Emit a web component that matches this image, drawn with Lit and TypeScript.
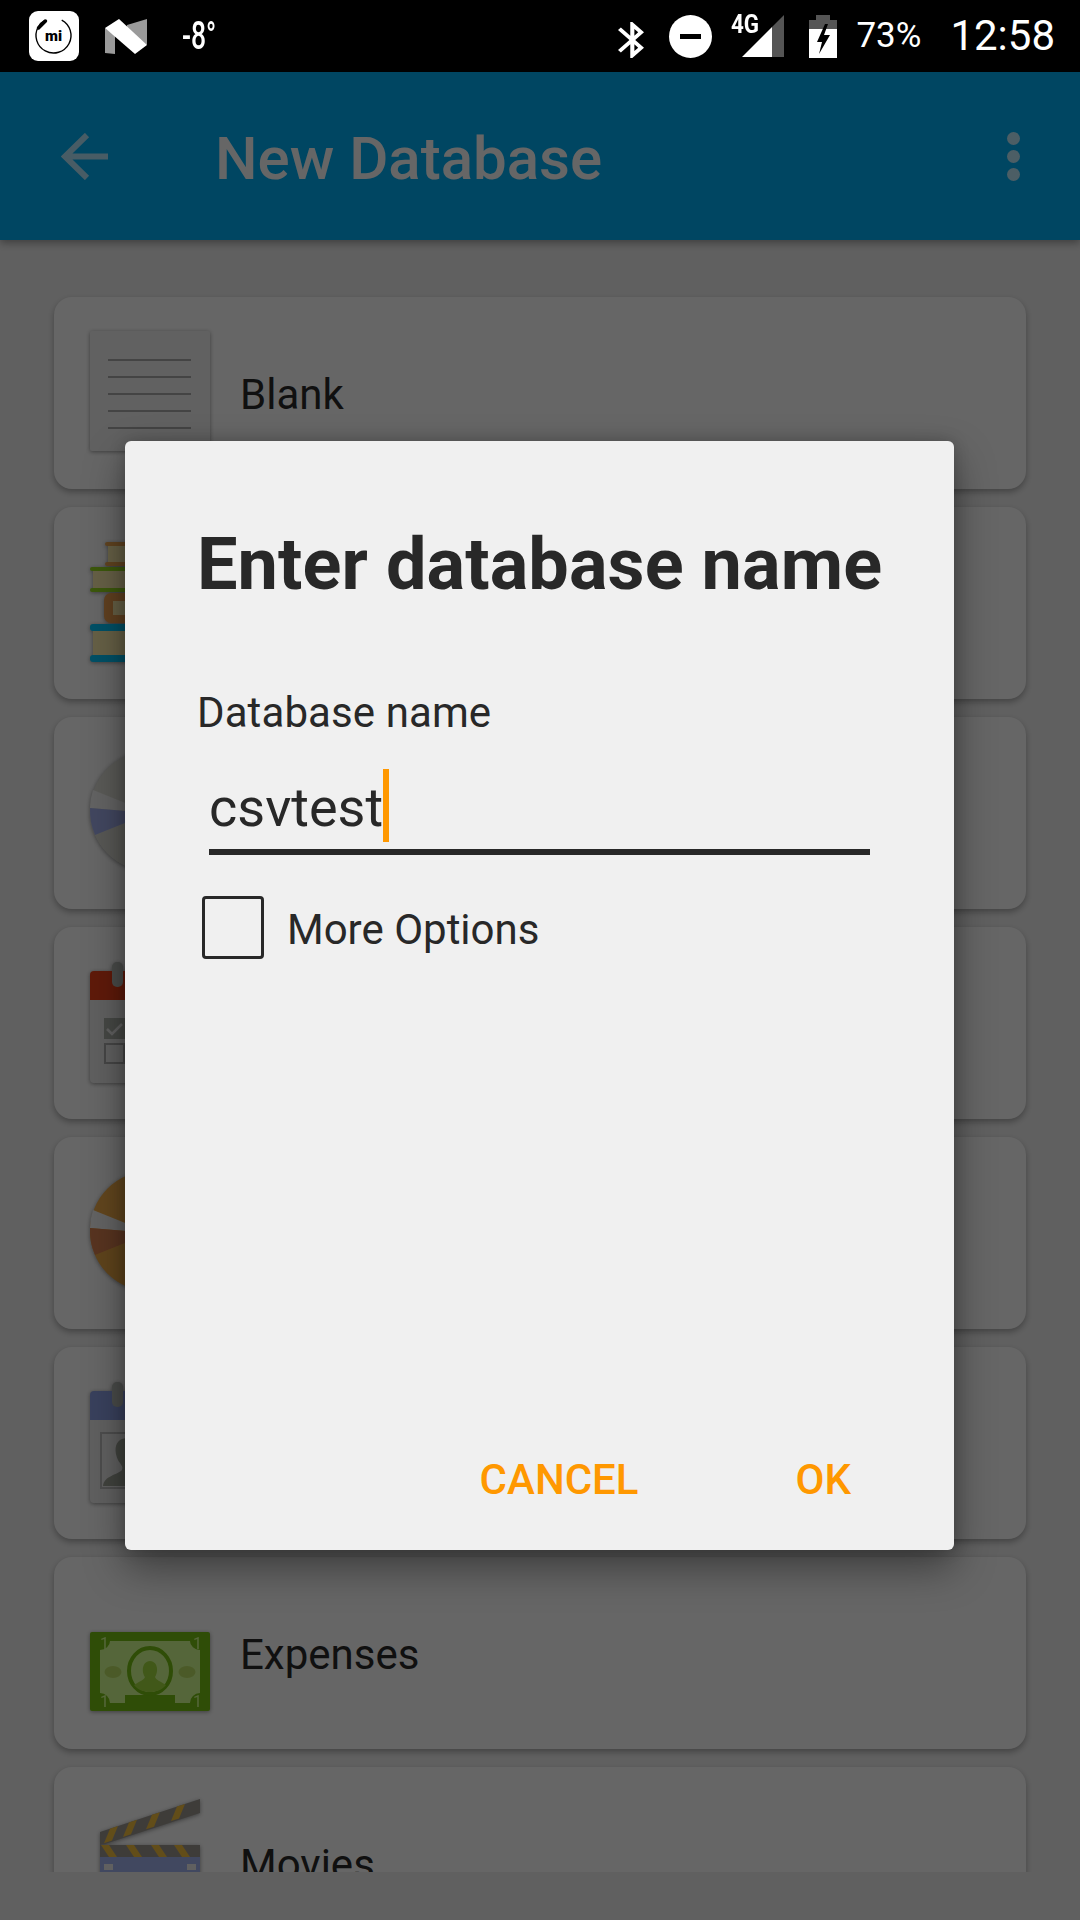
import { LitElement, html, css, svg } from 'lit';
import { customElement } from 'lit/decorators.js';

const docIcon = svg`
  <rect width="120" height="120" rx="2" fill="#f2f2f2" />
  ${[29, 46, 63, 80, 97].map((y) => svg`<rect x="18" y=${y - 1} width="83" height="2" fill="#aaa" />`)}
`;

const booksIcon = svg`
  <rect x="18" y="5" width="84" height="16" fill="#fff0b0" />
  <rect x="15" y="1" width="90" height="4" rx="2" fill="#f0a850" />
  <rect x="15" y="21" width="90" height="4" rx="2" fill="#f0a850" />
  <rect x="3" y="30" width="114" height="17" fill="#fff0b0" />
  <rect x="0" y="26" width="120" height="4" rx="2" fill="#96dc1e" />
  <rect x="0" y="47" width="120" height="4" rx="2" fill="#96dc1e" />
  <rect x="14" y="52" width="92" height="30" rx="7" fill="#f0a050" />
  <rect x="23" y="60" width="74" height="14" fill="#fff0b0" />
  <rect x="3" y="90" width="114" height="24" fill="#fff0b0" />
  <rect x="0" y="83" width="120" height="7" rx="3" fill="#00c8ff" />
  <rect x="0" y="114" width="120" height="7" rx="3" fill="#00c8ff" />
`;

const pieIcon = (top: string, bottom: string, wedge: string, light: string) => svg`
  <circle cx="60" cy="60" r="60" fill=${top} />
  <path d="M60 62 L5 84 A60 60 0 0 0 60 120 A60 60 0 0 0 120 60 L60 62 Z" fill=${bottom} />
  <path d="M60 62 L3 39 A60 60 0 0 0 0 57 Z" fill=${light} />
  <path d="M60 62 L0 57 A60 60 0 0 0 5 84 Z" fill=${wedge} />
`;

const pageIcon = (head: string, inner: unknown) => svg`
  <path d="M0 14 a4 4 0 0 1 4 -4 H116 a4 4 0 0 1 4 4 V39 H0 Z" fill=${head} />
  <path d="M0 39 H120 V118 a4 4 0 0 1 -4 4 H4 a4 4 0 0 1 -4 -4 Z" fill="#f0f0f0" />
  ${inner}
  <rect x="22" y="1" width="11" height="25" rx="5" fill="#b8bdb8" />
  <rect x="87" y="1" width="11" height="25" rx="5" fill="#b8bdb8" />
`;

const tasksIcon = pageIcon('#ee4119', svg`
  <rect x="14" y="57" width="21" height="21" fill="#b0b3ad" />
  <path d="M17 68 l5 5 l10 -10" fill="none" stroke="#f0f0f0" stroke-width="2.5" />
  <rect x="15" y="83" width="19" height="19" fill="none" stroke="#b0b0b0" stroke-width="2" />
  <rect x="42" y="64" width="62" height="5" fill="#b0b0b0" />
  <rect x="42" y="90" width="62" height="5" fill="#b0b0b0" />
`);

const contactIcon = pageIcon('#8fa3e8', svg`
  <rect x="11" y="52" width="54" height="55" fill="none" stroke="#c0c0c0" stroke-width="2" />
  <path d="M13 105 c1 -10 14 -11 19 -16 c1 -3 0 -4 -2 -7 c-6 -8 -8 -25 8 -25 c16 0 14 17 8 25 c-2 3 -3 4 -2 7 c5 5 18 6 19 16 Z" fill="#a4a79c" />
  <rect x="74" y="62" width="36" height="5" fill="#b0b0b0" />
  <rect x="74" y="78" width="36" height="5" fill="#b0b0b0" />
  <rect x="74" y="94" width="36" height="5" fill="#b0b0b0" />
`);

const billIcon = svg`
  <rect y="41" width="120" height="79" rx="2" fill="#75c012" />
  <path d="M20 50 H100 a10 9 0 0 0 10 9 V102 a10 10 0 0 0 -10 10 H85 V104 H35 V112 H20 a10 10 0 0 0 -10 -10 V59 a10 9 0 0 0 10 -9 Z" fill="#d4ff91" />
  <ellipse cx="23" cy="81" rx="8.5" ry="6" fill="#bce164" />
  <ellipse cx="97" cy="81" rx="8.5" ry="6" fill="#bce164" />
  <ellipse cx="60" cy="80" rx="21" ry="23" fill="#d4ff91" stroke="#75c012" stroke-width="4" />
  <path d="M44 94 c6 -4 10 -5 11 -8 c-3 -4 -4 -15 5 -16 c9 1 8 12 5 16 c1 3 5 4 11 8 c-4 5 -10 7 -16 7 c-6 0 -12 -2 -16 -7 Z" fill="#a4dc40" />
  <text class="bill-num" x="10" y="58">1</text>
  <text class="bill-num" x="103" y="58">1</text>
  <text class="bill-num" x="10" y="116">1</text>
  <text class="bill-num" x="103" y="116">1</text>
`;

const clapperIcon = svg`
  <path d="M10 31 L110 -2 V12 L15 43 L10 44 Z" fill="#9b9690" />
  ${[20, 39, 62, 87].map((x) => svg`<path d="M${x} ${31 - (x - 10) * 0.33} l8 -2.6 l-6 14.5 l-8 2.6 Z" fill="#f5c040" />`)}
  <rect x="10" y="44" width="100" height="12" fill="#9b9690" />
  ${[11, 36, 61, 84].map((x) => svg`<path d="M${x} 44 h8 l8 12 h-8 Z" fill="#f5c040" />`)}
  <rect x="10" y="56" width="100" height="60" fill="#a4b4f0" />
  <rect x="14" y="63" width="9" height="6" fill="#f0f0f0" />
  <rect x="97" y="63" width="9" height="6" fill="#f0f0f0" />
`;

const rows = [
  { label: 'Blank', icon: docIcon },
  { label: '', icon: booksIcon },
  { label: '', icon: pieIcon('#e2e2da', '#dcdcd4', '#a6b2f0', '#f8f8f8') },
  { label: '', icon: tasksIcon },
  { label: '', icon: pieIcon('#f5b04c', '#eeaa48', '#dc8250', '#f8f8f8') },
  { label: '', icon: contactIcon },
  { label: 'Expenses', icon: billIcon },
  { label: 'Movies', icon: clapperIcon },
];

@customElement('app-root')
export class AppRoot extends LitElement {
  static styles = css`
    :host {
      display: block;
      position: relative;
      width: 1080px;
      height: 1920px;
      overflow: hidden;
      background: #f0f0f0;
      font-family: Roboto, 'Liberation Sans', sans-serif;
    }
    .status {
      display: flex;
      align-items: center;
      height: 72px;
      background: #000;
      color: #fff;
      position: relative;
      z-index: 2;
    }
    .tile {
      width: 50px;
      height: 50px;
      margin-left: 29px;
      flex: none;
    }
    .nougat {
      width: 42px;
      height: 36px;
      margin-left: 26px;
      flex: none;
    }
    .temp {
      margin-left: 35px;
      width: 32px;
      font-size: 39px;
      line-height: 44px;
      font-weight: 500;
      white-space: nowrap;
      transform: scaleX(0.68);
      transform-origin: left center;
      flex: none;
    }
    .status-right {
      display: flex;
      align-items: center;
      margin-left: auto;
      margin-right: 25px;
    }
    .bt {
      width: 26px;
      height: 36px;
      margin-top: 8px;
    }
    .dnd {
      width: 43px;
      height: 43px;
      margin-left: 25px;
      margin-top: 1px;
    }
    .signal {
      position: relative;
      width: 53px;
      height: 42px;
      margin-left: 19px;
    }
    .signal svg {
      display: block;
      width: 53px;
      height: 42px;
    }
    .net {
      position: absolute;
      left: 0;
      top: -4px;
      font-size: 26px;
      line-height: 26px;
      font-weight: 700;
      transform: scaleX(0.86);
      transform-origin: left top;
    }
    .batt {
      width: 28px;
      height: 43px;
      margin-left: 25px;
    }
    .pct {
      margin-left: 19px;
      font-size: 35px;
      line-height: 40px;
    }
    .clock {
      margin-left: 29px;
      font-size: 42px;
      line-height: 48px;
    }

    .toolbar {
      display: flex;
      align-items: center;
      height: 168px;
      padding: 0 60px 0 61px;
      box-sizing: border-box;
      background: #00aff5;
      color: #fff;
      box-shadow: 0 3px 8px rgba(0, 0, 0, 0.35);
      position: relative;
    }
    .back {
      width: 47px;
      height: 47px;
      flex: none;
    }
    .toolbar-title {
      margin-left: 107px;
      padding-top: 5px;
      font-size: 60px;
      line-height: 72px;
      font-weight: 500;
    }
    .more {
      margin-left: auto;
      display: flex;
      flex-direction: column;
      gap: 5px;
    }
    .more span {
      width: 13px;
      height: 13px;
      border-radius: 50%;
      background: rgba(255, 255, 255, 0.75);
    }

    .list {
      height: 1632px;
      box-sizing: border-box;
      padding: 57px 54px 0;
      display: flex;
      flex-direction: column;
      gap: 18px;
      overflow: hidden;
    }
    .card {
      flex: none;
      display: flex;
      align-items: center;
      height: 192px;
      padding-left: 36px;
      box-sizing: border-box;
      background: #fff;
      border-radius: 18px;
      box-shadow: 0 3px 6px rgba(0, 0, 0, 0.3);
      color: #2a2a2a;
      font-size: 42px;
      line-height: 50px;
    }
    .card-label {
      padding-top: 4px;
    }
    .icon {
      width: 120px;
      height: 120px;
      flex: none;
      margin-top: -4px;
      margin-right: 30px;
      overflow: visible;
      filter: drop-shadow(0 1px 2px rgba(0, 0, 0, 0.4));
    }
    .bill-num {
      font-family: Roboto, sans-serif;
      font-size: 16px;
      fill: #d4ff91;
    }

    .scrim {
      position: absolute;
      inset: 72px 0 0 0;
      background: rgba(0, 0, 0, 0.6);
      display: flex;
      align-items: center;
    }
    .dialog {
      width: 829px;
      height: 1109px;
      margin: -1px 0 0 125px;
      box-sizing: border-box;
      padding: 82px 0 45px 72px;
      display: flex;
      flex-direction: column;
      background: #f0f0f0;
      border-radius: 6px;
      box-shadow: 0 18px 40px rgba(0, 0, 0, 0.4), 0 0 16px rgba(0, 0, 0, 0.2);
      color: #282828;
    }
    .dialog h1 {
      margin: 0;
      font-size: 72px;
      line-height: 84px;
      font-weight: 700;
      letter-spacing: 0.1px;
    }
    .field-label {
      margin-top: 81px;
      font-size: 42px;
      line-height: 50px;
      letter-spacing: 0.1px;
    }
    .input {
      margin: 38px 0 0 12px;
      width: 661px;
      height: 79px;
      box-sizing: border-box;
      border-bottom: 6px solid #282828;
      font-size: 54px;
      line-height: 64px;
    }
    .value {
      position: relative;
      display: inline-block;
    }
    .caret {
      position: absolute;
      left: 100%;
      top: -7px;
      width: 6px;
      height: 73px;
      background: #ff9800;
    }
    .check-row {
      display: flex;
      margin: 41px 0 0 5px;
    }
    .box {
      width: 62px;
      height: 63px;
      box-sizing: border-box;
      border: 3px solid #282828;
      border-radius: 4px;
    }
    .check-label {
      margin: 9px 0 0 23px;
      font-size: 42px;
      line-height: 50px;
    }
    .actions {
      margin-top: auto;
      display: flex;
      justify-content: flex-end;
      gap: 157px;
      padding-right: 103px;
      color: #ff9800;
      font-size: 42px;
      line-height: 50px;
      font-weight: 500;
    }
  `;

  render() {
    return html`
      <div class="status">
        <svg class="tile" viewBox="0 0 50 50">
          <rect width="50" height="50" rx="9" fill="#fff" />
          <circle cx="24.5" cy="24.5" r="17.5" fill="none" stroke="#000" stroke-width="1.4"
            stroke-dasharray="92 18" transform="rotate(-62 24.5 24.5)" />
          <path d="M9.5 17 L16.5 10" stroke="#000" stroke-width="3.4" stroke-linecap="round" />
          <text x="24.5" y="30" text-anchor="middle" font-size="15" font-weight="900" font-family="Roboto, sans-serif">mi</text>
        </svg>
        <svg class="nougat" viewBox="0 0 42 36">
          <path d="M0 10 L10 17 V36 L0 35 Z" fill="#9a9a9a" />
          <path d="M42 1 V27 L22 15 V7 Z" fill="#9a9a9a" />
          <path d="M0 10 L14 1 L42 27 L30 36 Z" fill="#fff" />
        </svg>
        <div class="temp">-8°</div>
        <div class="status-right">
          <svg class="bt" viewBox="5 2 12.71 20" preserveAspectRatio="none">
            <path fill="#fff" d="M17.71 7.71L12 2h-1v7.59L6.41 5 5 6.41 10.59 12 5 17.59 6.41 19 11 14.41V22h1l5.71-5.71-4.3-4.29 4.3-4.29zM13 5.83l1.88 1.88L13 9.59V5.83zm1.88 10.46L13 18.17v-3.76l1.88 1.88z" />
          </svg>
          <svg class="dnd" viewBox="0 0 43 43">
            <circle cx="21.5" cy="21.5" r="21.5" fill="#fff" />
            <rect x="11" y="19" width="21" height="5" fill="#000" />
          </svg>
          <div class="signal">
            <svg viewBox="0 0 53 42">
              <path d="M11 42 L41 12 V42 Z" fill="#fff" />
              <path d="M41 12 L53 0 V42 H41 Z" fill="#555" />
            </svg>
            <span class="net">4G</span>
          </div>
          <svg class="batt" viewBox="0 0 28 43">
            <path d="M7 0 H21 V5 H28 V14 H0 V5 H7 Z" fill="#555" />
            <rect y="14" width="28" height="29" fill="#fff" />
            <path d="M16 9 L8 27 H13 L10 39 L21 20 H15 L19 9 Z" fill="#000" />
          </svg>
          <span class="pct">73%</span>
          <span class="clock">12:58</span>
        </div>
      </div>

      <div class="toolbar">
        <svg class="back" viewBox="0 0 47 47" fill="none" stroke="rgba(255,255,255,.7)" stroke-width="6">
          <path d="M47 23.5 H4 M26 2 L4 23.5 L26 45" />
        </svg>
        <div class="toolbar-title">New Database</div>
        <div class="more"><span></span><span></span><span></span></div>
      </div>

      <div class="list">
        ${rows.map(
          (row) => html`
            <div class="card">
              <svg class="icon" viewBox="0 0 120 120">${row.icon}</svg>
              <span class="card-label">${row.label}</span>
            </div>
          `
        )}
      </div>

      <div class="scrim">
        <div class="dialog">
          <h1>Enter database name</h1>
          <div class="field-label">Database name</div>
          <div class="input"><span class="value">csvtest<i class="caret"></i></span></div>
          <div class="check-row">
            <div class="box"></div>
            <div class="check-label">More Options</div>
          </div>
          <div class="actions"><span>CANCEL</span><span>OK</span></div>
        </div>
      </div>
    `;
  }
}
